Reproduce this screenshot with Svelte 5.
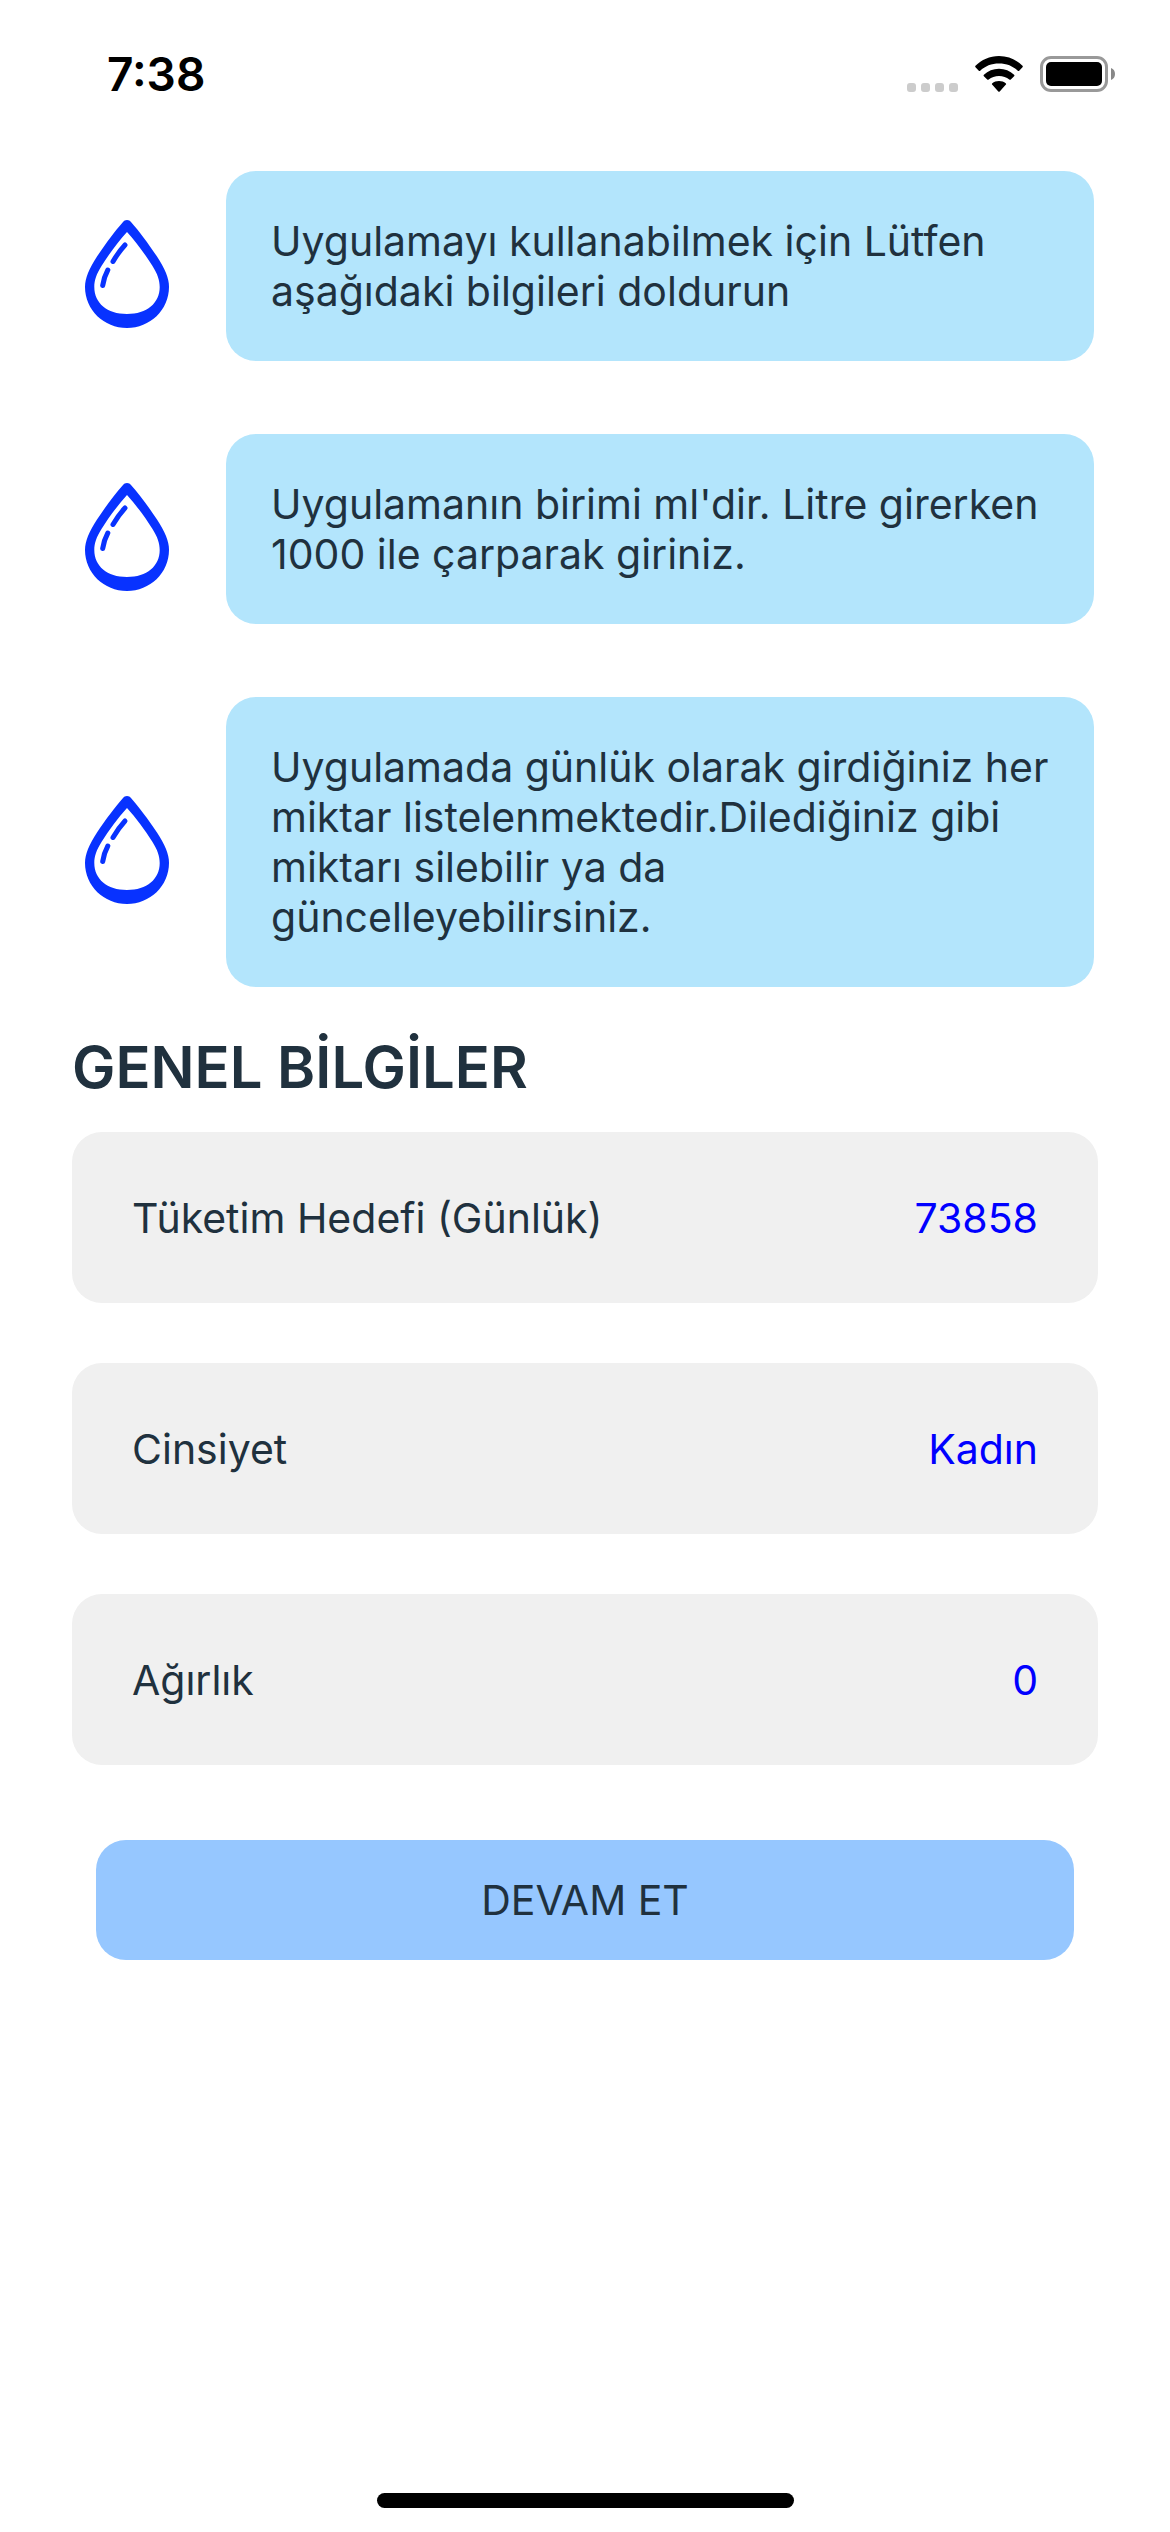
<script>
  const tips = [
    'Uygulamayı kullanabilmek için Lütfen aşağıdaki bilgileri doldurun',
    "Uygulamanın birimi ml'dir. Litre girerken 1000 ile çarparak giriniz.",
    'Uygulamada günlük olarak girdiğiniz her miktar listelenmektedir.Dilediğiniz gibi miktarı silebilir ya da güncelleyebilirsiniz.'
  ];

  let target = $state('73858');
  let gender = $state('Kadın');
  let weight = $state('0');
</script>

<div class="screen">
  <header class="status">
    <span class="time">7:38</span>
    <div class="indicators">
      <svg class="dots" width="51" height="9" viewBox="0 0 51 9" aria-hidden="true">
        <rect x="0" width="9" height="9" rx="3" />
        <rect x="14" width="9" height="9" rx="3" />
        <rect x="28" width="9" height="9" rx="3" />
        <rect x="42" width="9" height="9" rx="3" />
      </svg>
      <svg width="48" height="36" viewBox="0 0 48 36" aria-hidden="true">
        <path d="M.5 9.8a1 1 0 0 0 0 1.4l3.3 3.5a1 1 0 0 0 1.4 0C10 10.100 16.600 7.500 24 7.500s14 2.600 18.800 7.200a1 1 0 0 0 1.400 0l3.300-3.500a1 1 0 0 0 0-1.400C41.500 3.800 33.300 0 24 0S6.500 3.800.5 9.800Z" />
        <path d="M8.900 18.700a1 1 0 0 0 0 1.500l3.300 3.300a1.100 1.100 0 0 0 1.500 0C16.500 21.200 20 20 24 20s7.500 1.200 10.300 3.500a1.100 1.100 0 0 0 1.500 0l3.300-3.300a1 1 0 0 0 0-1.500C35 15 29.900 12.800 24 12.800S13 15 8.900 18.700Z" />
        <path d="M17.300 27.300a1 1 0 0 0 0 1.500l6 6.600a1 1 0 0 0 1.400 0l6-6.600a1 1 0 0 0 0-1.500c-1.700-1.500-4-2.300-6.700-2.300s-5 .8-6.700 2.300Z" />
      </svg>
      <svg class="battery" width="76" height="36" viewBox="0 0 76 36" aria-hidden="true">
        <rect x="1.500" y="1.500" width="65" height="33" rx="9.500" fill="none" stroke="#999" stroke-width="3" />
        <rect x="6" y="6" width="56" height="24" rx="5" />
        <path d="M71 12c2.600 1 4 3.300 4 6s-1.400 5-4 6Z" fill="#888" />
      </svg>
    </div>
  </header>

  <main>
    <ul class="tips">
      {#each tips as tip}
        <li>
          <svg class="drop" width="110" height="126" viewBox="0 0 110 126" aria-hidden="true">
            <path
              fill-rule="evenodd"
              d="M55 17c-1.800 0-3 .8-4.200 2.200C43 28 34 40 25 53.500C17 66 13 75 13 84c0 23 19 41 42 41s42-18 42-41c0-9-4-18-12-30.500C76 40 67 28 59.200 19.200C58 17.800 56.800 17 55 17Zm0 12C64 39 73 51 80.500 63C85.500 71 87.700 77 87.700 84c0 16-12.700 27-32.700 27S22.300 100 22.300 84c0-7 2.200-13 7.200-21C37 51 46 39 55 29Z"
            />
            <path class="shine" d="M53 42Q46.500 49 41 58.500M35.800 67Q32 74 30.700 82.500" />
          </svg>
          <p>{tip}</p>
        </li>
      {/each}
    </ul>

    <h1>GENEL BİLGİLER</h1>

    <form onsubmit={(e) => e.preventDefault()}>
      <div class="row">
        <label for="target">Tüketim Hedefi (Günlük)</label>
        <input id="target" type="text" inputmode="numeric" bind:value={target} />
      </div>
      <div class="row">
        <label for="gender">Cinsiyet</label>
        <select id="gender" bind:value={gender}>
          <option>Kadın</option>
          <option>Erkek</option>
        </select>
      </div>
      <div class="row">
        <label for="weight">Ağırlık</label>
        <input id="weight" type="text" inputmode="numeric" bind:value={weight} />
      </div>
      <button type="submit">DEVAM ET</button>
    </form>
  </main>

  <div class="home"></div>
</div>

<style>
  :global(body) {
    background: #fff;
  }

  .screen {
    box-sizing: border-box;
    min-height: 100vh;
    display: flex;
    flex-direction: column;
    font-family: Inter, 'Liberation Sans', sans-serif;
    font-size: 41px;
    line-height: 50px;
    color: #20313e;
  }

  .status {
    display: flex;
    align-items: center;
    justify-content: space-between;
    height: 148px;
    padding: 0 54px 0 107px;
  }

  .time {
    font-size: 46px;
    font-weight: 600;
    color: #000;
  }

  .indicators {
    display: flex;
    align-items: flex-end;
    gap: 17px;
  }

  .dots {
    fill: #ccc;
  }

  main {
    flex: 1;
    padding: 23px 72px 0;
  }

  .tips {
    list-style: none;
    margin: 0;
    padding: 0 4px 0 0;
    display: flex;
    flex-direction: column;
    gap: 73px;
  }

  li {
    display: flex;
    align-items: center;
    gap: 44px;
  }

  .drop {
    flex: none;
    fill: #0832ff;
  }

  .shine {
    fill: none;
    stroke: #0832ff;
    stroke-width: 5;
    stroke-linecap: round;
  }

  p {
    flex: 1;
    margin: 0;
    padding: 45px;
    border-radius: 30px;
    background: #b3e5fc;
  }

  h1 {
    margin: 44px 0 29px;
    font-size: 58px;
    line-height: 72px;
    font-weight: 600;
  }

  form {
    display: flex;
    flex-direction: column;
    gap: 60px;
  }

  .row {
    display: flex;
    align-items: center;
    justify-content: space-between;
    gap: 24px;
    padding: 60px;
    border-radius: 30px;
    background: #f0f0f0;
  }

  label {
    flex: none;
  }

  input,
  select {
    flex: 1;
    min-width: 0;
    height: 51px;
    margin: 0;
    padding: 0;
    border: 0;
    outline: 0;
    background: none;
    appearance: none;
    font: inherit;
    color: #00f;
    text-align: right;
    text-align-last: right;
  }

  button {
    margin: 15px 24px 0;
    padding: 35px;
    border: 0;
    border-radius: 30px;
    background: #96c7ff;
    font: inherit;
    color: inherit;
    cursor: pointer;
  }

  .home {
    align-self: center;
    width: 417px;
    max-width: 60%;
    height: 15px;
    margin-bottom: 24px;
    border-radius: 8px;
    background: #000;
  }
</style>
